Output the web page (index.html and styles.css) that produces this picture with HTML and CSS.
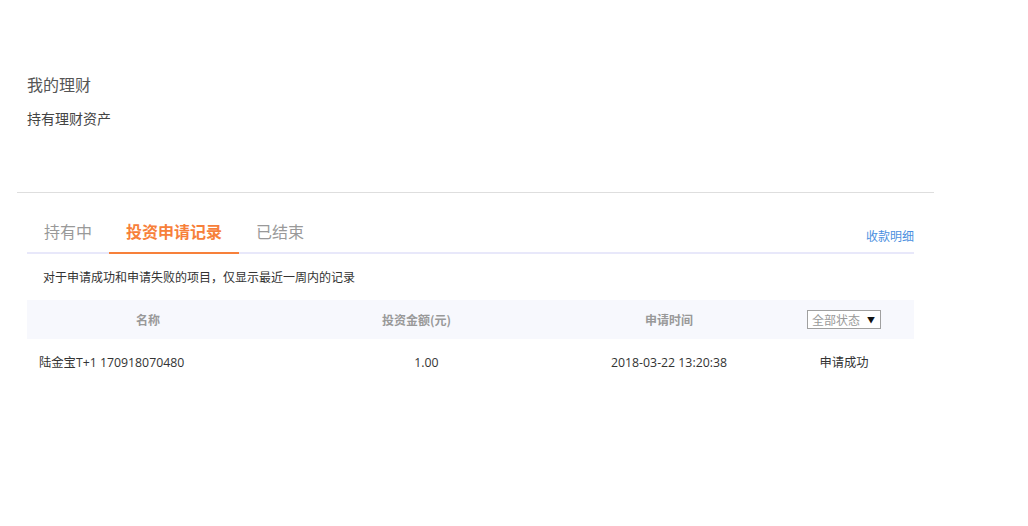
FILE: index.html
```html
<!DOCTYPE html>
<html lang="zh-CN">
<head>
<meta charset="utf-8">
<title>我的理财</title>
<link rel="stylesheet" href="styles.css">
</head>
<body>
<div class="page">
  <div class="head">
    <h1 class="title">我的理财</h1>
    <h2 class="subtitle">持有理财资产</h2>
  </div>
  <div class="divider"></div>
  <div class="main">
    <div class="tabbar">
      <div class="tabs">
        <span class="tab">持有中</span>
        <span class="tab active">投资申请记录</span>
        <span class="tab">已结束</span>
      </div>
      <a class="detail-link">收款明细</a>
    </div>
    <p class="notice">对于申请成功和申请失败的项目，仅显示最近一周内的记录</p>
    <div class="table">
      <div class="thead">
        <div class="col c1">名称</div>
        <div class="col c2">投资金额(元)</div>
        <div class="col c3">申请时间</div>
        <div class="col c4"><span class="select">全部状态<span class="arrow">▼</span></span></div>
      </div>
      <div class="trow">
        <div class="col c1 left">陆金宝T+1 170918070480</div>
        <div class="col c2 num">1.00</div>
        <div class="col c3">2018-03-22 13:20:38</div>
        <div class="col c4">申请成功</div>
      </div>
    </div>
  </div>
</div>
</body>
</html>
```

FILE: styles.css
```css
html, body {
  margin: 0;
  padding: 0;
  background: #fff;
}
body {
  font-family: "Noto Sans CJK SC", "Noto Sans", sans-serif;
  color: #333;
}
.page {
  width: 1028px;
}
.head {
  padding: 73px 0 0 27px;
  height: 110px;
  box-sizing: border-box;
}
.title {
  margin: 0;
  font-size: 16px;
  font-weight: normal;
  line-height: 22px;
  color: #555;
}
.subtitle {
  margin: 13px 0 0;
  font-size: 14px;
  font-weight: normal;
  line-height: 20px;
  color: #444;
}
.divider {
  margin: 82px 0 0 17px;
  width: 917px;
  height: 1px;
  background: #dedede;
}
.main {
  margin-left: 27px;
  width: 887px;
}
.tabbar {
  margin-top: 20px;
  display: flex;
  justify-content: space-between;
  align-items: flex-end;
  border-bottom: 2px solid #e8e8fa;
}
.tabs {
  display: flex;
}
.tab {
  padding: 0 17px;
  height: 39px;
  line-height: 36px;
  font-size: 16px;
  color: #999;
  margin-bottom: -2px;
  border-bottom: 2px solid transparent;
}
.tab.active {
  color: #f7803a;
  font-weight: bold;
  border-bottom-color: #f7803a;
}
.detail-link {
  font-size: 12px;
  color: #4a8fe0;
  line-height: 16px;
  margin-bottom: 8px;
}
.notice {
  margin: 14px 0 0 16px;
  font-size: 12px;
  line-height: 18px;
  color: #333;
}
.table {
  margin-top: 14px;
}
.thead, .trow {
  display: flex;
  align-items: center;
}
.thead {
  height: 39px;
  background: #f7f8fd;
  font-size: 12px;
  font-weight: bold;
  color: #999;
}
.trow {
  height: 46px;
  font-size: 12.3px;
  color: #333;
  font-family: "Open Sans", "Noto Sans CJK SC", sans-serif;
}
.col {
  text-align: center;
  box-sizing: border-box;
}
.c1 { width: 242px; }
.c2 { width: 295px; }
.c3 { width: 210px; }
.c4 { width: 140px; }
.col.left {
  text-align: left;
  padding-left: 12px;
}
.col.num {
  padding-left: 20px;
}
.select {
  display: inline-flex;
  align-items: center;
  justify-content: space-between;
  width: 74px;
  height: 19px;
  box-sizing: border-box;
  border: 1px solid #a0a0a0;
  padding: 0 5px 0 4px;
  font-size: 12px;
  font-weight: normal;
  color: #999;
  background: #fff;
  line-height: 17px;
}
.arrow {
  font-size: 8px;
  color: #111;
}
```
